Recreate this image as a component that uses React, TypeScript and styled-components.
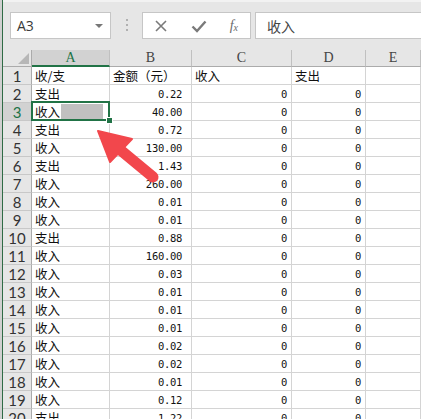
import styled, { createGlobalStyle, css } from 'styled-components';

const GlobalStyle = createGlobalStyle`
  html, body {
    margin: 0;
    padding: 0;
    background: #ffffff;
    overflow: hidden;
  }
`;

const GREEN = '#217346';
const GRID = '#d4d4d4';

type Row = { label: string; amount: string };

const rows: Row[] = [
  { label: '支出', amount: '0.22' },
  { label: '收入', amount: '40.00' },
  { label: '支出', amount: '0.72' },
  { label: '收入', amount: '130.00' },
  { label: '支出', amount: '1.43' },
  { label: '收入', amount: '260.00' },
  { label: '收入', amount: '0.01' },
  { label: '收入', amount: '0.01' },
  { label: '支出', amount: '0.88' },
  { label: '收入', amount: '160.00' },
  { label: '收入', amount: '0.03' },
  { label: '收入', amount: '0.01' },
  { label: '收入', amount: '0.01' },
  { label: '收入', amount: '0.01' },
  { label: '收入', amount: '0.02' },
  { label: '收入', amount: '0.02' },
  { label: '收入', amount: '0.01' },
  { label: '收入', amount: '0.12' },
  { label: '支出', amount: '1.22' },
];

const columns = ['A', 'B', 'C', 'D', 'E'];
const SELECTED_ROW = 3;

const App = () => {
  return (
    <Frame>
      <GlobalStyle />
      <FormulaBar>
        <NameBox>
          <span>A3</span>
          <Caret />
        </NameBox>
        <Grip>
          <i />
          <i />
          <i />
        </Grip>
        <FxButtons>
          <ToolIcon width="14" height="14" viewBox="0 0 14 14">
            <path d="M2 2 L12 12 M12 2 L2 12" stroke="#7a7a7a" strokeWidth="1.6" fill="none" />
          </ToolIcon>
          <ToolIcon width="16" height="14" viewBox="0 0 16 14">
            <path d="M1.5 7.5 L6 12 L14.5 2.5" stroke="#7a7a7a" strokeWidth="2.4" fill="none" />
          </ToolIcon>
          <Fx>
            f<sub>x</sub>
          </Fx>
        </FxButtons>
        <FormulaInput>收入</FormulaInput>
      </FormulaBar>

      <Sheet>
        <Corner />
        {columns.map((c) => (
          <ColHead key={c} $active={c === 'A'}>
            {c}
          </ColHead>
        ))}

        <RowHead $active={false}>1</RowHead>
        <Cell>收/支</Cell>
        <Cell>金额（元）</Cell>
        <Cell>收入</Cell>
        <Cell>支出</Cell>
        <Cell />

        {rows.map((r, i) => {
          const n = i + 2;
          const sel = n === SELECTED_ROW;
          return [
            <RowHead key={`h${n}`} $active={sel}>
              {n}
            </RowHead>,
            <Cell key={`a${n}`} $selected={sel}>
              {r.label}
              {sel && <Masked />}
            </Cell>,
            <Cell key={`b${n}`} $num $pad={9}>
              {r.amount}
            </Cell>,
            <Cell key={`c${n}`} $num>
              0
            </Cell>,
            <Cell key={`d${n}`} $num>
              0
            </Cell>,
            <Cell key={`e${n}`} />,
          ];
        })}
      </Sheet>

      <Arrow width="421" height="419" viewBox="0 0 421 419">
        <line x1="116" y1="148" x2="151" y2="177" stroke="#f2474c" strokeWidth="11" strokeLinecap="round" />
        <polygon points="96,131 130,139 108,162" fill="#f2474c" stroke="#f2474c" strokeWidth="2" strokeLinejoin="round" />
      </Arrow>
    </Frame>
  );
};

export default App;

const Frame = styled.div`
  position: relative;
  width: 421px;
  height: 419px;
  overflow: hidden;
  display: flex;
  flex-direction: column;
  background: #e6e6e6;
  border-left: 2px solid #d0d0d0;
  box-sizing: border-box;
  &::before {
    content: '';
    position: absolute;
    left: 0;
    top: 0;
    bottom: 0;
    width: 1px;
    background: #2f6b45;
    z-index: 3;
  }
`;

const FormulaBar = styled.div`
  height: 50px;
  flex: none;
  display: flex;
  align-items: flex-start;
  padding: 12px 0 0 8px;
  box-sizing: border-box;
  border-top: 2px solid #f2f2f2;
  background: #e6e6e6;
`;

const boxed = css`
  height: 27px;
  box-sizing: border-box;
  background: #ffffff;
  border: 1px solid #c6c6c6;
  display: flex;
  align-items: center;
`;

const NameBox = styled.div`
  ${boxed}
  width: 101px;
  margin-top: -2px;
  padding: 0 7px 0 6px;
  justify-content: space-between;
  font-family: 'Open Sans', 'Liberation Sans', sans-serif;
  font-size: 14px;
  color: #3a3a3a;
`;

const Caret = styled.span`
  width: 0;
  height: 0;
  border-left: 4px solid transparent;
  border-right: 4px solid transparent;
  border-top: 4px solid #777777;
`;

const Grip = styled.div`
  width: 31px;
  display: flex;
  flex-direction: column;
  align-items: center;
  gap: 3px;
  padding-top: 5px;
  i {
    width: 2px;
    height: 2px;
    background: #b0b0b0;
  }
`;

const FxButtons = styled.div`
  ${boxed}
  width: 109px;
  margin-top: -2px;
  justify-content: space-between;
  padding: 0 12px 0 11px;
`;

const ToolIcon = styled.svg`
  display: block;
`;

const Fx = styled.span`
  font-family: 'Liberation Serif', serif;
  font-style: italic;
  font-size: 14px;
  color: #6a6a6a;
  sub {
    font-size: 10px;
    vertical-align: -1px;
  }
`;

const FormulaInput = styled.div`
  ${boxed}
  flex: 1;
  margin: -2px 0 0 4px;
  padding-left: 11px;
  border-right: none;
  font-family: 'Noto Sans CJK SC', sans-serif;
  font-size: 14px;
  color: #444444;
`;

const Sheet = styled.div`
  flex: 1;
  display: grid;
  grid-template-columns: 29px 78px 82px 100px 74px 1fr;
  grid-template-rows: 17px;
  grid-auto-rows: 18px;
  background: #ffffff;
  margin-left: 1px;
`;

const headBase = css`
  background: #e6e6e6;
  box-sizing: border-box;
  display: flex;
  align-items: center;
  justify-content: center;
  color: #444444;
`;

const Corner = styled.div`
  ${headBase}
  position: relative;
  border-right: 1px solid #ababab;
  border-bottom: 1px solid #ababab;
  &::after {
    content: '';
    position: absolute;
    right: 2px;
    bottom: 2px;
    width: 0;
    height: 0;
    border-left: 11px solid transparent;
    border-bottom: 11px solid #b7b7b7;
  }
`;

const ColHead = styled.div<{ $active: boolean }>`
  ${headBase}
  font-family: 'Liberation Serif', serif;
  font-size: 14px;
  border-right: 1px solid #c0c0c0;
  border-bottom: ${(p) => (p.$active ? `2px solid ${GREEN}` : '1px solid #ababab')};
  background: ${(p) => (p.$active ? '#d2d2d2' : '#e6e6e6')};
  color: ${(p) => (p.$active ? GREEN : '#444444')};
  padding-top: ${(p) => (p.$active ? '1px' : '0')};
`;

const RowHead = styled.div<{ $active: boolean }>`
  ${headBase}
  font-family: Lato, 'Liberation Sans', sans-serif;
  font-size: 15px;
  border-right: 1px solid #ababab;
  border-bottom: 1px solid #c8c8c8;
  background: ${(p) => (p.$active ? '#d2d2d2' : '#e6e6e6')};
  color: ${(p) => (p.$active ? GREEN : '#333333')};
`;

const Cell = styled.div<{ $num?: boolean; $pad?: number; $selected?: boolean }>`
  position: relative;
  box-sizing: border-box;
  border-right: 1px solid ${GRID};
  border-bottom: 1px solid ${GRID};
  display: flex;
  align-items: center;
  white-space: nowrap;
  color: #111111;
  ${(p) =>
    p.$num
      ? css`
          justify-content: flex-end;
          padding-right: ${p.$pad ?? 4}px;
          font-family: 'DejaVu Sans Mono', 'Liberation Mono', monospace;
          font-size: 10.5px;
          letter-spacing: -0.3px;
        `
      : css`
          padding-left: 3px;
          font-family: 'Noto Sans CJK SC', sans-serif;
          font-size: 12.5px;
        `}
  ${(p) =>
    p.$selected &&
    css`
      z-index: 2;
      &::after {
        content: '';
        position: absolute;
        left: -1px;
        top: -2px;
        right: -1px;
        bottom: -1px;
        border: 2px solid ${GREEN};
      }
      &::before {
        content: '';
        position: absolute;
        right: -4px;
        bottom: -4px;
        width: 5px;
        height: 5px;
        background: ${GREEN};
        border: 1px solid #ffffff;
        z-index: 1;
      }
    `}
`;

const Masked = styled.span`
  display: inline-block;
  width: 42px;
  height: 15px;
  margin-left: 1px;
  background: #c0c0c0;
`;

const Arrow = styled.svg`
  position: absolute;
  left: 0;
  top: 0;
  pointer-events: none;
  z-index: 5;
`;
